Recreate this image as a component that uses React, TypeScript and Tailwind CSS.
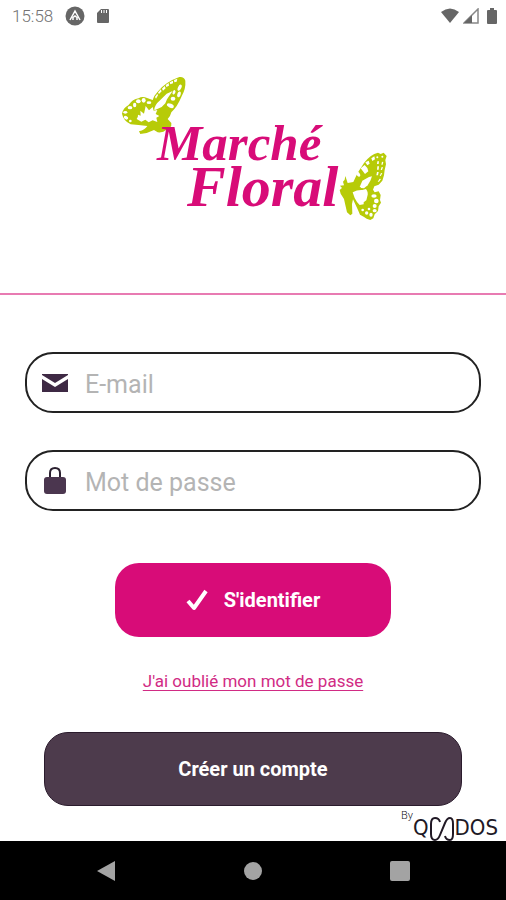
import React from "react";

function StatusBar() {
  return (
    <div className="flex h-8 shrink-0 items-center justify-between px-2 text-[#737373]">
      <div className="flex items-center pl-1">
        <span className="text-[17px] font-light leading-none">15:58</span>
        <svg className="ml-3 size-5" viewBox="0 0 20 20" aria-hidden="true">
          <circle cx="10" cy="10" r="9.5" fill="#666" />
          <path d="M5 14 10 5 15 14M8 14V11.500L10 10l2 1.500V14" fill="none" stroke="#fff" strokeWidth="1.500" />
        </svg>
        <svg className="ml-3 h-4 w-3" viewBox="0 0 12 16" aria-hidden="true">
          <path d="M4 1h7q1 0 1 1v12q0 1-1 1H1q-1 0-1-1V5Z" fill="#666" />
          <path d="M4.500 2v3M7 2v3M9.500 2v3" stroke="#fff" strokeWidth="1" />
        </svg>
      </div>
      <div className="flex items-center gap-1">
        <svg className="h-4 w-[18px]" viewBox="0 0 18 16" aria-hidden="true">
          <path d="M0 4Q9-3 18 4L9 15Z" fill="#666" />
        </svg>
        <svg className="size-4" viewBox="0 0 16 16" aria-hidden="true">
          <path d="M1 15 15 1v14Z" fill="none" stroke="#888" strokeWidth="1.500" />
          <path d="M1 15 9 7v8Z" fill="#666" />
        </svg>
        <svg className="ml-1 mr-px h-4 w-[10px]" viewBox="0 0 10 16" aria-hidden="true">
          <path d="M3 0h4v2h2q1 0 1 1v12q0 1-1 1H1q-1 0-1-1V3q0-1 1-1h2Z" fill="#666" />
        </svg>
      </div>
    </div>
  );
}

function Logo() {
  return (
    <svg className="h-[170px] w-[286px]" viewBox="0 0 286 170" role="img" aria-label="Marché Floral">
      <g transform="scale(.33333)">
        <path
          d="M36 146Q40 128 55 121Q68 102 86 100Q94 94 105 97L128 105Q132 91 143 80Q166 51 208 36Q222 34 226 47Q228 70 215 94Q202 126 184 142Q181 155 173 162L184 174Q186 183 179 189L181 197L168 195Q160 204 143 202L132 195Q114 205 91 207L87 199Q105 195 112 183Q84 180 62 178Q40 167 36 146Z"
          fill="#b7cb08"
        />
        <g fill="#fff">
          <path d="M80 162Q85 154 84 149L92 152 91 137 102 146 107 123 117 136 128 126 131 137 142 135 137 147 148 153 139 158 142 171 128 166 116 172 106 164 94 170Z" />
          <path d="M133 136Q132 121 151 105L170 86 188 78 177 94 171 103 166 115 155 126 142 132Z" />
          <path d="m135 96 7-10 2 5-6 10zm9-13 8-10 3 6-8 8zm12-12 8-8 3 7-8 7zm11-11 9-6 1 8-8 4zm12-8 10-5v8l-8 3zm13-7 10-4-2 9-7 2z" />
          <ellipse cx="209" cy="68" rx="5" ry="10" transform="rotate(25 209 68)" />
          <ellipse cx="207" cy="88" rx="5" ry="9" transform="rotate(20 207 88)" />
          <ellipse cx="189" cy="101" rx="7" ry="6" />
          <ellipse cx="181" cy="122" rx="11" ry="6" transform="rotate(25 181 122)" />
          <ellipse cx="192" cy="82" rx="4" ry="7" transform="rotate(20 192 82)" />
          <ellipse cx="46" cy="142" rx="6" ry="4" />
          <ellipse cx="48" cy="158" rx="7" ry="5" transform="rotate(30 48 158)" />
          <circle cx="61" cy="168" r="4" />
          <ellipse cx="60" cy="128" rx="7" ry="5" />
          <ellipse cx="74" cy="120" rx="5" ry="7" />
          <ellipse cx="85" cy="109" rx="7" ry="6" />
          <ellipse cx="101" cy="106" rx="6" ry="7" />
          <ellipse cx="117" cy="113" rx="7" ry="4" />
        </g>
      </g>
      <g transform="translate(140 0) scale(.33333)">
        <path
          d="M286 333 293 354 310 351Q321 323 342 294Q361 268 384 263L392 267 401 263 410 273 406 285 408 298 404 315 402 331 397 347 386 359 373 364 369 374 374 382 386 379 392 390 390 405 393 413 386 424 384 438 374 448 370 460 361 465 350 461 341 455 330 449 324 435 317 420 309 403 306 417 307 446 301 451 291 442 286 420 282 402 272 386 269 375 276 369 270 362 282 361 279 350 284 344Z"
          fill="#b7cb08"
        />
        <g fill="#fff">
          <path d="M308 382q14-8 29-7l11-3q8 10 4 22l-3 12-8 6 0 6-12 2-8-9-7-12z" />
          <path d="m330 364 7-17 20-11 9-2-5 13-8 14-11 9-9-1z" />
          <ellipse cx="324" cy="327" rx="5" ry="9" transform="rotate(-35 324 327)" />
          <path d="m332 310 12-10 8 9 3 10-10 8zM346 292l10-5 3 9-7 5zM364 280l9-6 2 9-8 5z" />
          <circle cx="382" cy="277" r="3" />
          <circle cx="397" cy="275" r="3" />
          <path d="m382 289 5 0-1 8h-5zm0 15 5 0-1 10h-5zm-1 17 5 0-2 10h-5z" />
          <path d="m396 290 4 1-2 8h-4zm-1 16 4 1-3 8h-4zm-2 18 4 1-5 8h-3zm-4 17 4 1-6 8h-4z" />
          <ellipse cx="372" cy="393" rx="8" ry="5" />
          <circle cx="379" cy="408" r="7" />
          <circle cx="374" cy="423" r="6" />
          <ellipse cx="374" cy="437" rx="6" ry="5" />
          <ellipse cx="363" cy="449" rx="5" ry="6" />
          <circle cx="350" cy="444" r="5" />
          <circle cx="357" cy="432" r="4" />
          <circle cx="338" cy="435" r="4" />
        </g>
      </g>
      <g fill="#d80c78" fontFamily="'Liberation Serif', serif" fontStyle="italic" fontWeight="700">
        <text x="47" y="95" fontSize="51">Marché</text>
        <text x="77" y="141" fontSize="58">Floral</text>
      </g>
    </svg>
  );
}

function Field({ id, type, label, icon }: { id: string; type: string; label: string; icon: React.ReactNode }) {
  return (
    <div className="flex h-[61px] items-center rounded-[28px] border-2 border-[#222] bg-white pl-[14px] pr-6">
      <label htmlFor={id} aria-label={label} className="flex w-7 shrink-0 justify-center">
        {icon}
      </label>
      <input
        id={id}
        type={type}
        placeholder={label}
        className="ml-4 h-full w-full min-w-0 bg-transparent pt-1 text-[25px] outline-none placeholder:text-[#b4b4b4]"
      />
    </div>
  );
}

function MailIcon() {
  return (
    <svg className="h-[18px] w-[26px]" viewBox="0 0 26 18" aria-hidden="true">
      <path d="M0 0h26v1L13 9 0 1ZM0 5l13 8 13-8v13H0Z" fill="#3e2944" />
    </svg>
  );
}

function LockIcon() {
  return (
    <svg className="h-[27px] w-[22px]" viewBox="0 0 22 27" aria-hidden="true">
      <path d="M6 12V6q0-5 5-5t5 5v6" fill="none" stroke="#2b2030" strokeWidth="2" />
      <rect y="10" width="22" height="17" rx="3" fill="#4b364f" />
    </svg>
  );
}

function Credit() {
  return (
    <div className="flex h-[35px] items-start justify-end pr-2 text-[#211925]">
      <span className="mt-1 text-[11px] font-light leading-none">By</span>
      <span className="mt-2 flex items-end font-['DejaVu_Sans_Condensed','DejaVu_Sans',sans-serif] text-[22px] leading-7">
        Q
        <svg className="mb-px h-6 w-[26px]" viewBox="0 0 26 24" role="img" aria-label="OO">
          <path
            d="M11 5Q10 1 6 1 2 1 2 7v10q0 6 4 6 3 0 5-5l5-12q2-5 5-5 3 0 3 6v10q0 6-3 6-4 0-5-4"
            fill="none"
            stroke="currentColor"
            strokeWidth="2"
          />
        </svg>
        DOS
      </span>
    </div>
  );
}

function NavigationBar() {
  return (
    <nav className="flex h-[59px] shrink-0 items-center justify-around bg-black px-8" aria-label="Navigation">
      <button type="button" aria-label="Retour">
        <svg className="size-5" viewBox="0 0 20 20" aria-hidden="true">
          <path d="M1 10 19 0v20Z" fill="#a3a3a3" />
        </svg>
      </button>
      <button type="button" aria-label="Accueil" className="size-[18px] rounded-full bg-[#a3a3a3]" />
      <button type="button" aria-label="Applications" className="size-5 rounded-xs bg-[#a3a3a3]" />
    </nav>
  );
}

export default function App() {
  return (
    <div className="flex min-h-screen flex-col bg-white font-[Roboto,sans-serif]">
      <StatusBar />
      <header className="flex justify-center border-b-2 border-[#e87bb2] pb-[58px] pt-[33px]">
        <h1>
          <Logo />
        </h1>
      </header>
      <main className="flex grow flex-col">
        <form className="flex flex-col px-[25px] pt-[57px]" onSubmit={(e) => e.preventDefault()}>
          <div className="flex flex-col gap-[37px]">
            <Field id="email" type="email" label="E-mail" icon={<MailIcon />} />
            <Field id="password" type="password" label="Mot de passe" icon={<LockIcon />} />
          </div>
          <button
            type="submit"
            className="mx-auto mt-[52px] flex h-[74px] w-[276px] items-center justify-center gap-4 rounded-3xl bg-[#d80c78] text-xl font-bold text-white"
          >
            <svg className="h-6 w-[22px]" viewBox="0 0 22 24" aria-hidden="true">
              <path d="m2 13 6 7L20 3" fill="none" stroke="#fff" strokeWidth="4" strokeLinejoin="round" />
            </svg>
            S'identifier
          </button>
        </form>
        <a href="#mot-de-passe" className="mx-auto mt-8 text-[17px] leading-6 text-[#d12b84] underline underline-offset-3">
          J'ai oublié mon mot de passe
        </a>
        <div className="mt-[39px] px-11">
          <button
            type="button"
            className="h-[74px] w-full rounded-3xl border border-[#2a1b2c] bg-[#4d3b4c] text-xl font-bold text-white"
          >
            Créer un compte
          </button>
        </div>
        <Credit />
      </main>
      <NavigationBar />
    </div>
  );
}
